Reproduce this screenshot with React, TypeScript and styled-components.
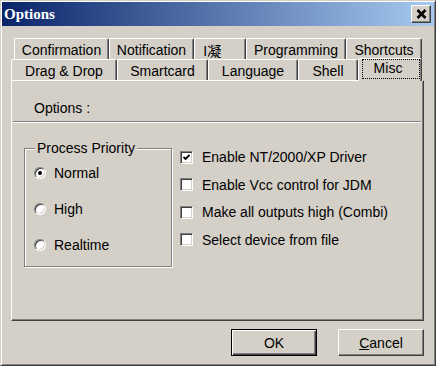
import React from "react";
import styled, { createGlobalStyle, css } from "styled-components";

const Global = createGlobalStyle`
  html, body { margin: 0; padding: 0; background: #d4d0c8; }
  body {
    font-family: "Liberation Sans", Arial, "Noto Sans CJK SC", sans-serif;
    font-size: 14px;
    color: #000;
  }
`;

const face = "#d4d0c8";

const raised = css`
  border: 1px solid;
  border-color: #fff #404040 #404040 #fff;
  box-shadow: inset -1px -1px #808080;
`;

const sunken = css`
  border: 1px solid;
  border-color: #808080 #fff #fff #808080;
  box-shadow: inset 1px 1px #404040, inset -1px -1px ${face};
`;

const Window = styled.div`
  width: 436px;
  height: 366px;
  box-sizing: border-box;
  background: ${face};
  border: 1px solid;
  border-color: ${face} #404040 #404040 ${face};
  box-shadow: inset 1px 1px #fff, inset -1px -1px #808080;
  padding: 1px;
  display: flex;
  flex-direction: column;
`;

const TitleBar = styled.div`
  height: 24px;
  flex-shrink: 0;
  display: flex;
  align-items: center;
  justify-content: space-between;
  padding: 0 3px 0 2px;
  background: linear-gradient(to right, #0a246a, #a6caf0);
`;

const TitleText = styled.span`
  font-family: "Liberation Serif", "Times New Roman", serif;
  font-weight: bold;
  font-size: 15px;
  color: #fff;
  padding-top: 1px;
`;

const CloseButton = styled.div`
  width: 20px;
  height: 18px;
  box-sizing: border-box;
  background: ${face};
  ${raised};
  display: flex;
  align-items: center;
  justify-content: center;
`;

const Body = styled.div`
  flex: 1;
  display: flex;
  flex-direction: column;
  padding: 12px 10px 0 9px;
`;

const TabStrip = styled.div`
  display: flex;
  flex-direction: column;
`;

const TabRow = styled.div<{ $indent: number }>`
  display: flex;
  padding-left: ${(p) => p.$indent}px;
`;

const Tab = styled.div<{ $w: number; $active?: boolean }>`
  width: ${(p) => p.$w}px;
  height: 21px;
  box-sizing: border-box;
  display: flex;
  align-items: center;
  justify-content: center;
  background: ${face};
  border-left: 1px solid #fff;
  border-top: 1px solid #fff;
  border-right: 1px solid #404040;
  box-shadow: inset -1px 0 #808080;
  border-radius: 2px 2px 0 0;
  padding-top: 1px;
  white-space: nowrap;
  ${(p) =>
    p.$active &&
    css`
      position: relative;
      z-index: 1;
      height: 23px;
      margin-top: -1px;
      margin-bottom: -1px;
      padding: 0 0 2px 2px;
      align-items: stretch;
    `}
`;

const FocusLabel = styled.span`
  flex: 1;
  display: flex;
  align-items: center;
  justify-content: center;
  border: 1px dotted #000;
  margin: 0 1px 0 1px;
  padding: 0 6px 2px 0;
`;

const Panel = styled.div`
  width: 413px;
  height: 241px;
  box-sizing: border-box;
  border: 1px solid;
  border-color: #fff #404040 #404040 #fff;
  box-shadow: inset -1px -1px #808080;
  display: flex;
  flex-direction: column;
`;

const PanelHeader = styled.div`
  height: 40px;
  box-sizing: border-box;
  display: flex;
  align-items: flex-end;
  padding: 0 0 5px 22px;
  line-height: 16px;
`;

const Separator = styled.div`
  border-top: 1px solid #808080;
  border-bottom: 1px solid #fff;
  margin: 0 2px 0 1px;
`;

const Content = styled.div`
  display: flex;
  align-items: flex-start;
  gap: 8px;
  padding: 17px 0 0 12px;
`;

const Group = styled.fieldset`
  margin: 0;
  width: 148px;
  box-sizing: border-box;
  border: 1px solid #808080;
  box-shadow: inset 1px 1px #fff, 1px 1px #fff;
  padding: 0 0 13px 8px;
`;

const GroupLegend = styled.legend`
  padding: 0 2px;
  margin-left: 2px;
  line-height: 16px;
  background: ${face};
`;

const OptionList = styled.div<{ $gap: number; $top: number }>`
  display: flex;
  flex-direction: column;
  gap: ${(p) => p.$gap}px;
  margin-top: ${(p) => p.$top}px;
`;

const OptionRow = styled.label`
  display: flex;
  align-items: center;
  height: 16px;
  line-height: 16px;
  white-space: nowrap;
`;

const RadioCircle = styled.span<{ $on?: boolean }>`
  width: 12px;
  height: 12px;
  box-sizing: border-box;
  background: #fff;
  ${sunken};
  border-radius: 50%;
  margin: 0 8px 0 1px;
  display: flex;
  align-items: center;
  justify-content: center;
  &::after {
    content: "";
    width: 4px;
    height: 4px;
    border-radius: 50%;
    background: ${(p) => (p.$on ? "#000" : "transparent")};
  }
`;

const CheckBox = styled.span`
  width: 13px;
  height: 13px;
  box-sizing: border-box;
  background: #fff;
  ${sunken};
  margin-right: 9px;
  display: flex;
  align-items: center;
  justify-content: center;
`;

const ButtonRow = styled.div`
  display: flex;
  justify-content: flex-end;
  gap: 21px;
  margin-top: 8px;
`;

const Button = styled.div<{ $default?: boolean }>`
  width: 86px;
  height: 27px;
  box-sizing: border-box;
  background: ${face};
  display: flex;
  align-items: center;
  justify-content: center;
  ${raised};
  ${(p) =>
    p.$default &&
    css`
      border-color: #000;
      box-shadow: inset 1px 1px #fff, inset -1px -1px #404040, inset -2px -2px #808080;
    `}
`;

const Mnemonic = styled.span`
  text-decoration: underline;
`;

const row1 = [
  { label: "Confirmation", w: 95 },
  { label: "Notification", w: 85 },
  { label: "I凝\u00a0\u00a0\u00a0\u00a0", w: 52 },
  { label: "Programming", w: 100 },
  { label: "Shortcuts", w: 76 },
];

const row2 = [
  { label: "Drag & Drop", w: 106 },
  { label: "Smartcard", w: 91 },
  { label: "Language", w: 90 },
  { label: "Shell", w: 60 },
  { label: "Misc", w: 64, active: true },
];

const priorities = [
  { label: "Normal", on: true },
  { label: "High" },
  { label: "Realtime" },
];

const checks = [
  { label: "Enable NT/2000/XP Driver", on: true },
  { label: "Enable Vcc control for JDM" },
  { label: "Make all outputs high (Combi)" },
  { label: "Select device from file" },
];

export default function App() {
  return (
    <>
      <Global />
      <Window>
        <TitleBar>
          <TitleText>Options</TitleText>
          <CloseButton>
            <svg width="11" height="10" viewBox="0 0 11 10">
              <path d="M1.5 1 L9.5 9 M9.5 1 L1.5 9" stroke="#000" strokeWidth="2.6" />
            </svg>
          </CloseButton>
        </TitleBar>
        <Body>
          <TabStrip>
            <TabRow $indent={3}>
              {row1.map((t) => (
                <Tab key={t.label} $w={t.w}>
                  {t.label}
                </Tab>
              ))}
            </TabRow>
            <TabRow $indent={0}>
              {row2.map((t) =>
                t.active ? (
                  <Tab key={t.label} $w={t.w} $active>
                    <FocusLabel>{t.label}</FocusLabel>
                  </Tab>
                ) : (
                  <Tab key={t.label} $w={t.w}>
                    {t.label}
                  </Tab>
                )
              )}
            </TabRow>
          </TabStrip>
          <Panel>
            <PanelHeader>Options :</PanelHeader>
            <Separator />
            <Content>
              <Group>
                <GroupLegend>Process Priority</GroupLegend>
                <OptionList $gap={20} $top={9}>
                  {priorities.map((r) => (
                    <OptionRow key={r.label}>
                      <RadioCircle $on={r.on} />
                      {r.label}
                    </OptionRow>
                  ))}
                </OptionList>
              </Group>
              <OptionList $gap={11.5} $top={9}>
                {checks.map((c) => (
                  <OptionRow key={c.label}>
                    <CheckBox>
                      {c.on && (
                        <svg width="7" height="7" viewBox="0 0 7 7">
                          <path d="M0.5 3 L2.5 5 L6.5 1" stroke="#000" strokeWidth="1.8" fill="none" />
                        </svg>
                      )}
                    </CheckBox>
                    {c.label}
                  </OptionRow>
                ))}
              </OptionList>
            </Content>
          </Panel>
          <ButtonRow>
            <Button $default>OK</Button>
            <Button>
              <span>
                <Mnemonic>C</Mnemonic>ancel
              </span>
            </Button>
          </ButtonRow>
        </Body>
      </Window>
    </>
  );
}
